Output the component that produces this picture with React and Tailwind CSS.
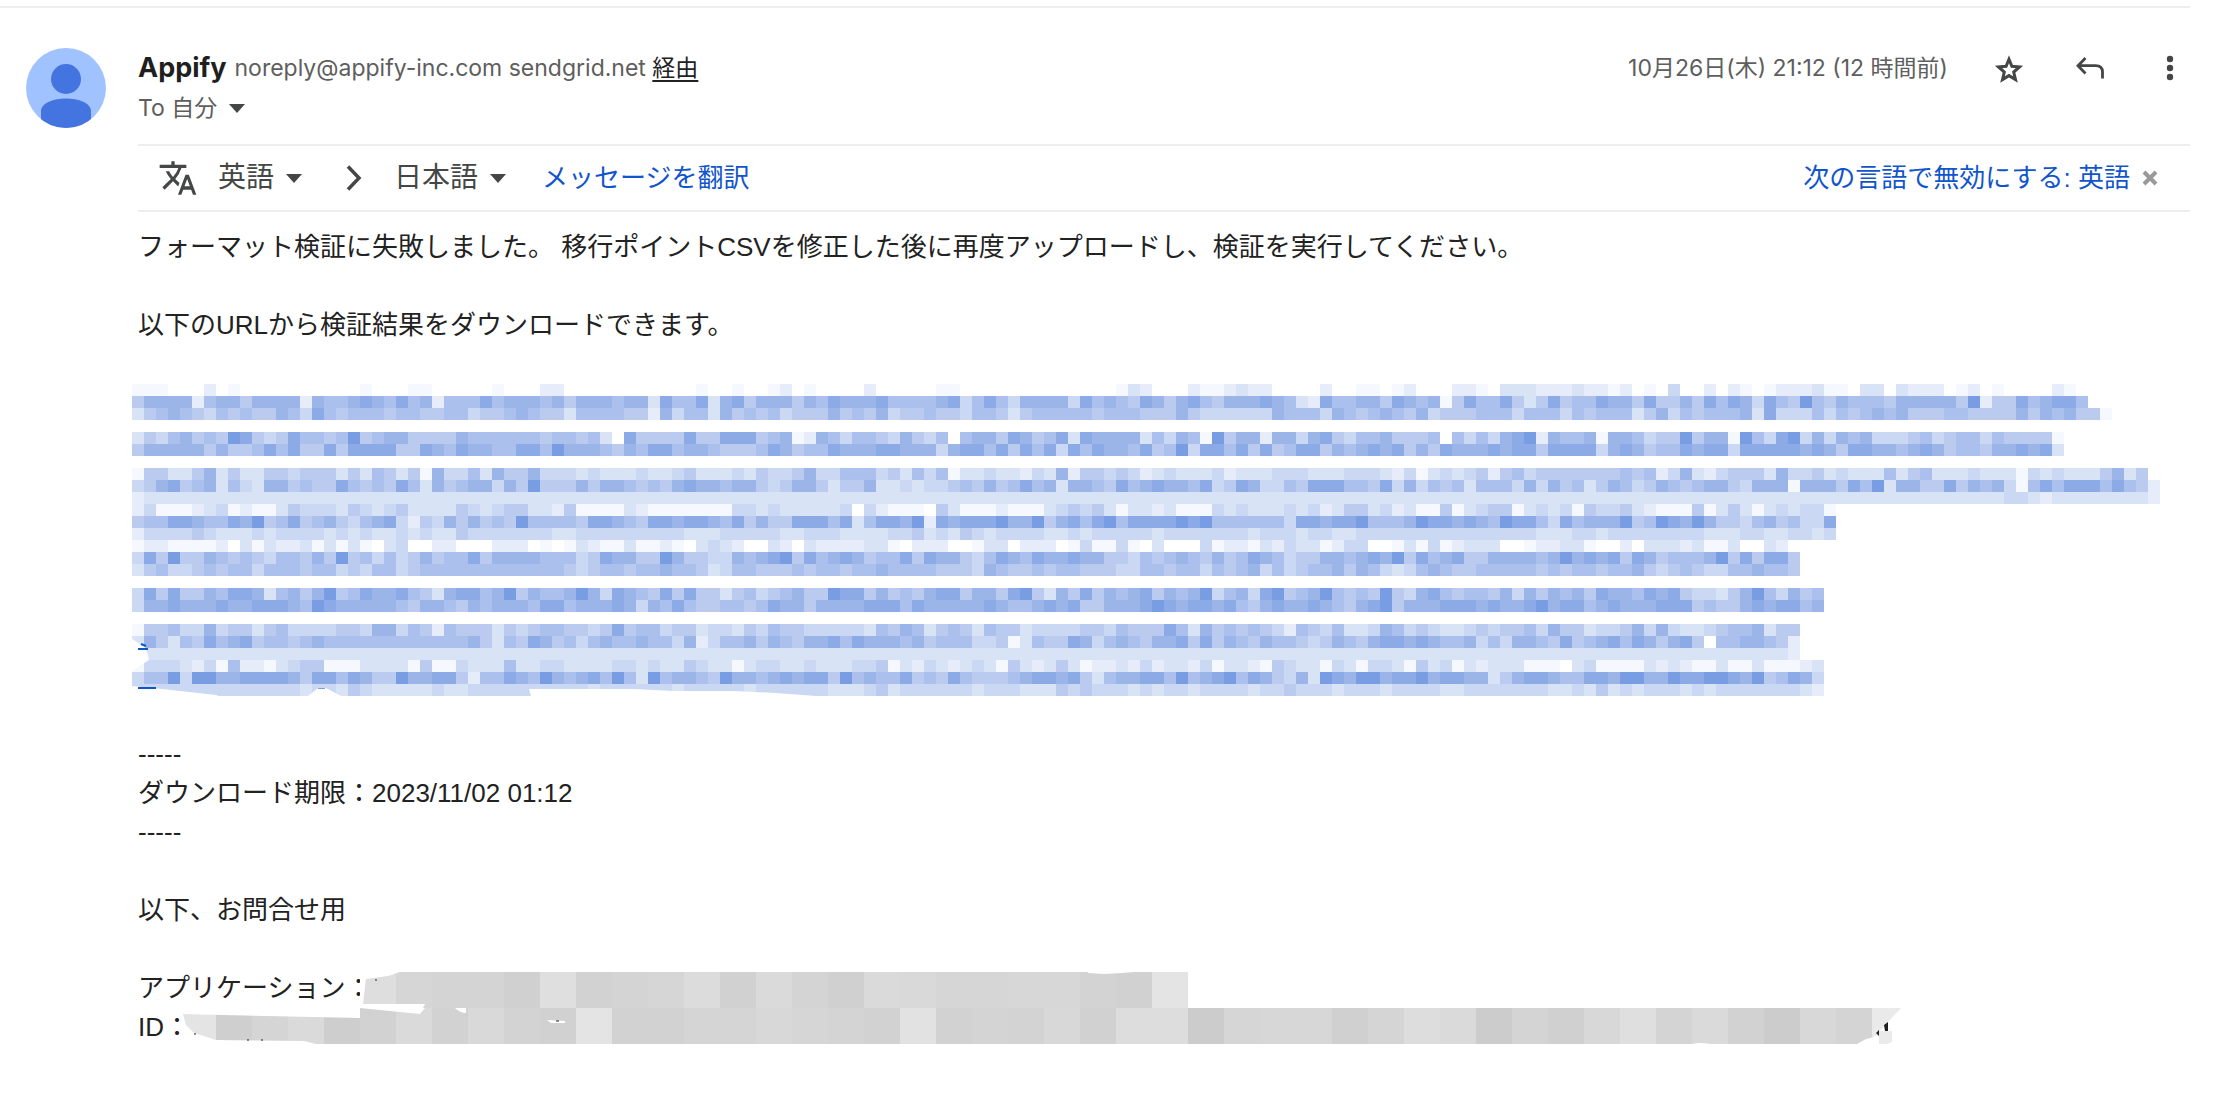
import React from 'react';
import { MdTranslate } from 'react-icons/md';

// 0 = clear, 9 = darkest
const SHADES = [
  'none', '#f5f8fe', '#e6ecf9', '#d8e3f6', '#cad8f3',
  '#bacbef', '#abc0ec', '#9cb5e9', '#8caae6', '#799de2',
];

// One string per row of 12px tiles
const LINK_TILES = [
  '1110002010' + '0000000001' + '0001100000' + '1000220000' + '0000000100' + '10012010' + '0002000001' + '1000000000' + '0000132000' + '2112322000' + '0200110120' + '002210' + '3332223221' + '2010400202' + '1012223110' + '3303222012' + '01000021',
  '5777726775' + '7777276678' + '7686726668' + '6777675777' + '6773866837' + '85777576' + '8777866667' + '8468647777' + '4867658757' + '8657778763' + '2866775876' + '715866' + '8535856687' + '7585575868' + '7486596576' + '6657777759' + '255867886',
  '3567654656' + '5576486566' + '6566556645' + '5676553666' + '6552746637' + '56564555' + '7565745565' + '5466535666' + '6656665557' + '5444444766' + '6476567657' + '455566' + '6466646566' + '6357465666' + '7384446465' + '6767555665' + '5557576755' + '1',
  '',
  '3546756598' + '5458665695' + '6775555766' + '6666566563' + '0855558558' + '88567127' + '6466547546' + '0677587568' + '3877773647' + '6195772774' + '7854667555' + '606464' + '7892766717' + '7645595771' + '9648947476' + '7444564566' + '4655551',
  '5777775755' + '6868558588' + '8855876877' + '6688697776' + '5768867765' + '55687566' + '8777887774' + '7886858684' + '8687768569' + '4886858568' + '8576787857' + '587778' + '7885888847' + '8756687884' + '8888878758' + '8776787566' + '5778783',
  '',
  '1553357353' + '3554555353' + '6535174463' + '7557444343' + '3343345333' + '43544574' + '4666453646' + '1334332437' + '2554542343' + '3342333444' + '3334443241' + '343452' + '5645555555' + '6562473245' + '5537445343' + '3363563334' + '3331434333' + '5735',
  '4578567364' + '3775655865' + '6586375677' + '4759555757' + '7656578776' + '77545775' + '3557334344' + '5657568673' + '7765867877' + '6845874465' + '8886658474' + '656366' + '6474756357' + '6457656775' + '4777177758' + '6937755857' + '6741686888' + '68652',
  '2' + '3'.repeat(155) + '44' + '3233333333' + '2',
  '2411123412' + '1135444354' + '3453333543' + '4553325111' + '1321111111' + '44343333' + '3404211105' + '3111211134' + '5453133231' + '1143433343' + '4235534231' + '151345' + '5134341544' + '5321115135' + '31343441',
  '5668876687' + '9568567546' + '7842547575' + '6596666588' + '7658878876' + '85755888' + '6836887928' + '7888977957' + '8689688889' + '8966666648' + '8788966679' + '887876' + '9886486777' + '9569879755' + '46756448',
  '2444454333' + '4344443434' + '3343433544' + '4444433444' + '4444443334' + '44443344' + '4333344534' + '3543444433' + '4344444344' + '4444434443' + '4433444444' + '444444' + '4443334434' + '4444444333' + '44334434',
  '1221111203' + '1322313131' + '0340022000' + '2220101321' + '1311210343' + '20032032' + '2223310222' + '0013302220' + '1411410300' + '0412213243' + '3124400131' + '412333' + '0012233100' + '2033323113' + '0032',
  '4859557656' + '5466575956' + '4645756685' + '7777666458' + '7755975544' + '76789586' + '7875668587' + '7546876877' + '8775546567' + '6575687645' + '5776787958' + '678557' + '7776797878' + '5875666795' + '85885',
  '3564456566' + '4666566454' + '6645666666' + '6666665456' + '6566766534' + '66555656' + '6566766665' + '5547655656' + '6555446656' + '6465674645' + '6675764346' + '765566' + '6665656656' + '6754565446' + '67665',
  '',
  '4858557688' + '7367579568' + '7786537886' + '7957667974' + '8765858553' + '56456755' + '9885756578' + '8577589537' + '5857678576' + '7946748956' + '7965659547' + '865665' + '7475767587' + '7687854435' + '7964756',
  '4778777877' + '8887698777' + '7765776576' + '7776886777' + '8747686556' + '65687757' + '7778886877' + '7778766787' + '8557778987' + '8878657877' + '8765789577' + '788878' + '7789788678' + '7778885655' + '7878867',
  '',
  '1556447455' + '3564444554' + '7746526555' + '3545665545' + '8566455344' + '35465544' + '4443657635' + '6536553444' + '4554655586' + '3756565426' + '5463347645' + '433454' + '5564755344' + '5747433456' + '67355',
  '3753658678' + '5665676666' + '6666666675' + '3658756467' + '6676647246' + '67576577' + '8687776756' + '6644513655' + '8746765778' + '5857657665' + '4576578878' + '766746' + '4776585678' + '6875785066' + '77652',
  '3' + '3'.repeat(137) + '2',
  '1444324162' + '2134551113' + '3331511433' + '3633443333' + '4434335433' + '13443343' + '3344513243' + '2343153235' + '3122324233' + '2413321543' + '3143144315' + '341323' + '3311103411' + '1132321131' + '1311123',
  '4669499778' + '8887588687' + '5597788526' + '6876976786' + '9639677659' + '77678788' + '5967668565' + '8655567887' + '8536778869' + '6789687547' + '3987997889' + '788773' + '5788766887' + '9977988998' + '7956874',
  '4444444444' + '4444344354' + '3333343344' + '4444444434' + '4444434444' + '43444444' + '3334534444' + '4434443335' + '4544434344' + '3444434454' + '4434443444' + '433444' + '4444334353' + '4344434344' + '4444432',
];

// Grey levels of the 36px tiles
const APP_TILES = 'de d6 d4 d4 d0 df d2 d4 d6 dc d1 da d4 d0 da d9 d6 d6 d7 d7 d3 d1 e4'.split(' ');
const ID_TILES = 'e4 cf d5 da ce d2 da d2 d9 d3 d1 e4 d2 d2 d5 d5 d8 d6 d4 d2 e2 d2 d4 d3 d8 d1 dd dd cc d6 d7 d7 d0 d5 dd da cc d4 d0 d8 df d4 da d2 cc d8 d4 ea'.split(' ');

const Caret = () => (
  <svg viewBox="0 0 16 9" className="w-4 h-[9px] shrink-0" fill="#444746" aria-hidden="true">
    <path d="M0 0h16L8 9z" />
  </svg>
);

const Avatar = () => (
  <svg viewBox="0 0 80 80" className="w-20 h-20 shrink-0" role="img" aria-label="Appify">
    <clipPath id="avatar"><circle cx="40" cy="40" r="40" /></clipPath>
    <g clipPath="url(#avatar)">
      <rect width="80" height="80" fill="#a0c3ff" />
      <circle cx="40" cy="31" r="15" fill="#4374e0" />
      <path d="M15 80V63c0-8 13-12.500 25-12.500S65 55 65 63v17z" fill="#4374e0" />
    </g>
  </svg>
);

const LanguageSelect = ({ label, value, className }) => (
  <div className="flex items-center gap-3">
    <select aria-label={label} defaultValue={value} className={`appearance-none bg-transparent text-[28px] leading-10 text-[#444746] ${className}`}>
      <option>{value}</option>
    </select>
    <Caret />
  </div>
);

const RedactedLink = () => (
  <svg viewBox="0 0 2028 312" className="block w-[2028px] h-[312px] -ml-1.5" shapeRendering="crispEdges" aria-hidden="true">
    {LINK_TILES.map((row, y) =>
      row.split('').map((shade, x) =>
        shade === '0' ? null : (
          <rect key={`${y}-${x}`} x={x * 12} y={y * 12} width="12" height="12" fill={SHADES[shade]} />
        )
      )
    )}
    <g fill="#fff" shapeRendering="auto">
      <path d="M0 255l14 9 3 12-17 11z" />
      <path d="M0 302l30 3 54 6 8 3H0z" />
      <path d="M176 312l10-8h8l15 8z" />
      <path d="M397 305h105l40 2 60 0 42 2 40 3H399z" />
    </g>
    <path d="M6 265h10M6 304h18" stroke="#1155cc" strokeWidth="2" />
    <path d="M9 260l5 2" stroke="#1155cc" strokeWidth="2" shapeRendering="auto" />
    <path d="M186 304h7" stroke="#7d9fe3" />
  </svg>
);

const RedactedApp = () => (
  <svg viewBox="0 0 828 36" className="block w-[828px] h-9" aria-hidden="true">
    <g shapeRendering="crispEdges">
      {APP_TILES.map((level, i) => (
        <rect key={i} x={i * 36} width="36" height="36" fill={`#${level}${level}${level}`} />
      ))}
    </g>
    <path d="M0 0h40l-12 4-22 3-3 25h62l-2 4H0z" fill="#fff" />
    <path d="M728 0h46l-12 1-18 1-16-1z" fill="#fff" />
    <path d="M15 8h2" stroke="#222" />
  </svg>
);

const RedactedId = () => (
  <svg viewBox="0 0 1728 36" className="block w-[1728px] h-9" aria-hidden="true">
    <g shapeRendering="crispEdges">
      {ID_TILES.map((level, i) => (
        <rect key={i} x={i * 36} width="36" height="36" fill={`#${level}${level}${level}`} />
      ))}
    </g>
    <g fill="#fff">
      <path d="M180 0h65l-5 6-60-6v10L0 6V0z" />
      <path d="M0 4l3 2 3 11 8 8 22 7 88 1 12 3H0z" />
      <path d="M275 0h11v5q-6 0-11-5z" />
      <path d="M367 12l18 1v2h-14z" />
      <path d="M1721 0h7v36h-51l9-5 8-2z" />
      <path d="M1512 36q8-2 18 0z" />
    </g>
    <path d="M1699 23h13v11l-5 2h-8z" fill="#eaeaea" />
    <path d="M1704 17l4-3v9h-3zM1699 22l-3 3 3 3z" fill="#1f1f1f" />
    <path d="M14 26h2M376 13h3M67 32h2M81 32h2" stroke="#222" />
  </svg>
);

const Message = () => (
  <div className="mt-4 text-[26px] leading-[39px] text-[#222]">
    <p>フォーマット検証に失敗しました。 移行ポイントCSVを修正した後に再度アップロードし、検証を実行してください。</p>
    <br />
    <p>以下のURLから検証結果をダウンロードできます。</p>
    <br />
    <RedactedLink />
    <br />
    <p>-----</p>
    <p>ダウンロード期限：2023/11/02 01:12</p>
    <p>-----</p>
    <br />
    <p>以下、お問合せ用</p>
    <br />
    <div className="flex items-end">
      <span className="w-[222px] shrink-0 whitespace-nowrap">アプリケーション：</span>
      <RedactedApp />
    </div>
    <div className="flex items-start">
      <span className="w-[42px] shrink-0 whitespace-nowrap">ID：</span>
      <RedactedId />
    </div>
  </div>
);

const App = () => {
  return (
    <div className="min-h-screen overflow-hidden bg-white pt-1.5 pr-8 font-['Liberation_Sans','Noto_Sans_CJK_JP',sans-serif]">
      <main className="flex items-start gap-8 border-t-2 border-[#eee] pl-[26px] pt-10">
        <Avatar />

        <div className="flex-1 min-w-0">
          <header className="flex justify-between h-24 text-[23px] font-['Inter','Noto_Sans_CJK_JP',sans-serif] text-[#5e5e5e]">
            <div>
              <div className="flex items-center gap-2 h-10">
                <h1 className="text-[27px] font-bold text-[#1f1f1f]">Appify</h1>
                <p>
                  noreply@appify-inc.com sendgrid.net{' '}
                  <a href="#via" className="text-[#222] underline underline-offset-4">経由</a>
                </p>
              </div>
              <button className="flex items-center gap-3 h-10">
                To 自分 <Caret />
              </button>
            </div>

            <div className="flex items-center h-10 text-[#444746]">
              <time className="text-[#5e5e5e]">10月26日(木) 21:12 (12 時間前)</time>
              <button aria-label="スター" className="ml-[46px] pt-0.5">
                <svg viewBox="0 0 30 29" className="w-[30px] h-[29px]" fill="none" stroke="currentColor" strokeWidth="3" strokeMiterlimit="10">
                  <path d="M15 4.200L17.900 11.300 25.500 12 19.700 17 21.500 24.600 15 20.600 8.500 24.600 10.300 17 4.500 12 12.100 11.300z" />
                </svg>
              </button>
              <button aria-label="返信" className="ml-[52px]">
                <svg viewBox="0 0 28 22" className="w-7 h-[22px]" fill="none" stroke="currentColor" strokeWidth="2.800">
                  <path d="M9.500 1L2 8.700l7.500 7.800M2 8.700H19.500q7 0 7 6.300v6.500" />
                </svg>
              </button>
              <button aria-label="その他" className="ml-[62px] pr-4">
                <svg viewBox="0 0 8 26" className="w-2 h-[26px]" fill="currentColor">
                  <circle cx="4" cy="4" r="3.200" />
                  <circle cx="4" cy="13" r="3.200" />
                  <circle cx="4" cy="22" r="3.200" />
                </svg>
              </button>
            </div>
          </header>

          {/* Translation bar */}
          <section className="flex items-center justify-between h-[68px] border-y-2 border-[#eee]">
            <div className="flex items-center pl-5">
              <MdTranslate size={40} className="text-[#444746]" />
              <div className="ml-5">
                <LanguageSelect label="翻訳元" value="英語" className="w-14" />
              </div>
              <svg viewBox="0 0 16 26" className="w-4 h-[26px] ml-11 mr-8" fill="none" stroke="#444746" strokeWidth="3.500">
                <path d="M2 1.500L13 13 2 24.500" />
              </svg>
              <LanguageSelect label="翻訳先" value="日本語" className="w-[84px]" />
              <a href="#translate" className="ml-9 text-[26px] text-[#1155cc]">メッセージを翻訳</a>
            </div>
            <div className="flex items-center gap-3 pr-8">
              <a href="#disable" className="text-[26px] text-[#1155cc]">次の言語で無効にする: 英語</a>
              <button aria-label="閉じる">
                <svg viewBox="0 0 16 16" className="w-4 h-4" fill="none" stroke="#999" strokeWidth="4">
                  <path d="M2 2l12 12M14 2L2 14" />
                </svg>
              </button>
            </div>
          </section>

          <Message />
        </div>
      </main>
    </div>
  );
};

export default App;
